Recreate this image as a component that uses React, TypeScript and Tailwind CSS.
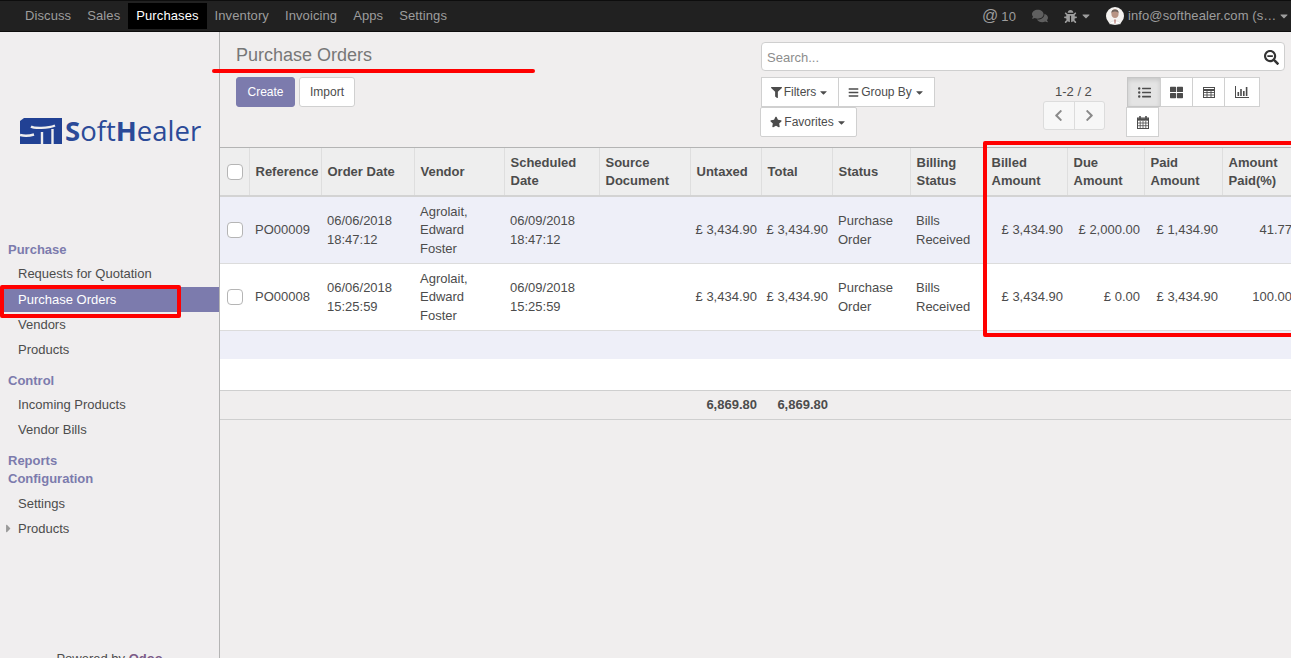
import { FaBars, FaBug, FaCaretDown, FaCaretRight, FaChevronLeft, FaChevronRight, FaComments, FaFilter, FaListUl, FaSearchMinus, FaStar, FaThLarge } from 'react-icons/fa';

const navItems = ['Discuss', 'Sales', 'Purchases', 'Inventory', 'Invoicing', 'Apps', 'Settings'];

const colWidths = [29, 72, 93, 90, 95, 91, 71, 71, 78, 75, 82, 77, 78, 74];

const headers = ['Reference', 'Order Date', 'Vendor', 'Scheduled Date', 'Source Document', 'Untaxed', 'Total', 'Status', 'Billing Status', 'Billed Amount', 'Due Amount', 'Paid Amount', 'Amount Paid(%)'];

const rows = [
  { ref: 'PO00009', date: ['06/06/2018', '18:47:12'], sched: ['06/09/2018', '18:47:12'], billed: '£ 3,434.90', due: '£ 2,000.00', paid: '£ 1,434.90', pct: '41.77', tint: true },
  { ref: 'PO00008', date: ['06/06/2018', '15:25:59'], sched: ['06/09/2018', '15:25:59'], billed: '£ 3,434.90', due: '£ 0.00', paid: '£ 3,434.90', pct: '100.00', tint: false },
];

function Checkbox() {
  return <div className="ml-[7px] h-4 w-4 rounded-[4px] border border-[#b5b5b5] bg-white" />;
}

function SideItem({ label, active, caret }: { label: string; active?: boolean; caret?: boolean }) {
  return (
    <div className={`relative flex h-[25px] items-center pl-[18px] ${active ? 'bg-[#7c7bad] text-white' : 'text-[#4c4c4c]'}`}>
      {caret && <FaCaretRight className="absolute left-[2px] text-[13px] text-[#999]" />}
      {label}
    </div>
  );
}

function SideHeading({ label }: { label: string }) {
  return <div className="pl-2 font-bold leading-[18px] text-[#7c7bad]">{label}</div>;
}

function Logo() {
  return (
    <div className="flex h-[28px] items-center pl-5">
      <svg width="42" height="26" viewBox="0 0 42 26" className="shrink-0">
        <rect width="42" height="26" fill="#214194" />
        <path d="M0 0 H4 L0 3 Z" fill="#eeedee" />
        <path d="M11 8.5 C14 10.5 28 10.5 35 7.5 M0 17 C4 18 9 18 14 16.5 M22 14 V26 M32.5 11 V26" stroke="#eeedee" strokeWidth="2.4" fill="none" />
      </svg>
      <span className="ml-[3px] whitespace-nowrap font-['Open_Sans',sans-serif] text-[27.5px] leading-none text-[#2b4a98]">
        <span className="font-bold">S</span>oft<span className="font-bold">H</span>ealer
      </span>
    </div>
  );
}

function Avatar() {
  return (
    <svg width="18" height="18" viewBox="0 0 18 18" className="shrink-0">
      <circle cx="9" cy="9" r="9" fill="#f4f2f0" />
      <ellipse cx="9" cy="6.6" rx="3.6" ry="4.4" fill="#b89484" />
      <path d="M5.4 6 C5 1.4 13 1.4 12.6 6 C11 4 7 4 5.4 6 Z" fill="#6d625c" />
      <path d="M3.5 17 C4 12.8 14 12.8 14.5 17 Z" fill="#fff" stroke="#ccc" strokeWidth="0.5" />
      <path d="M8.4 12.5 H9.6 L9.4 16.5 H8.6 Z" fill="#a8574e" />
    </svg>
  );
}

function BarChartIcon() {
  return (
    <svg width="14" height="12" viewBox="0 0 14 12" fill="#4c4c4c">
      <path d="M0 0 H1 V11 H14 V12 H0 Z" />
      <rect x="2.5" y="6" width="1.6" height="4" />
      <rect x="5.2" y="3" width="1.6" height="7" />
      <rect x="8" y="5" width="1.6" height="5" />
      <rect x="10.8" y="1" width="1.6" height="9" />
    </svg>
  );
}

function TableIcon() {
  return (
    <svg width="12" height="11" viewBox="0 0 12 11" fill="none" stroke="#4c4c4c">
      <rect x="0.5" y="0.5" width="11" height="10" />
      <path d="M0 3 H12" strokeWidth="2" />
      <path d="M0 5.5 H12 M0 8 H12 M4 2 V11 M8 2 V11" strokeWidth="0.9" />
    </svg>
  );
}

function CalendarIcon() {
  return (
    <svg width="12" height="13" viewBox="0 0 12 13" fill="none" stroke="#4c4c4c">
      <rect x="0.5" y="2" width="11" height="10.5" />
      <path d="M0 3.5 H12" strokeWidth="2.4" />
      <path d="M3 0 V3 M9 0 V3" strokeWidth="1.6" />
      <path d="M0 7 H12 M0 9.7 H12 M3.2 5 V13 M6 5 V13 M8.8 5 V13" strokeWidth="0.8" />
    </svg>
  );
}

const toolBtn = 'flex h-[30px] items-center justify-center border border-[#d0d0d0] bg-white text-[#4c4c4c]';

export default function App() {
  return (
    <div className="relative flex h-[658px] w-full flex-col overflow-hidden bg-[#f0eeee] font-['Liberation_Sans',Arial,sans-serif] text-[13px] text-[#4c4c4c]">
      {/* top bar */}
      <div className="flex h-[32px] shrink-0 items-center border-y border-[#0d0d0d] bg-[#212121] pl-[17px] pr-px tracking-[0.1px] text-[#9d9d9d]">
        {navItems.map((item) => (
          <div key={item} className={`flex h-[26px] items-center px-2 ${item === 'Purchases' ? 'bg-black text-white' : ''}`}>
            {item}
          </div>
        ))}
        <div className="ml-auto flex items-center">
          <span className="text-[16px] leading-none">@</span>
          <span className="ml-[3px] mt-px">10</span>
          <FaComments className="ml-[16px] text-[16px] text-[#5f5f5f]" />
          <FaBug className="ml-[16px] text-[13px]" />
          <FaCaretDown className="ml-[3px] text-[12px]" />
          <div className="ml-[14px]"><Avatar /></div>
          <span className="ml-1 w-[149px] whitespace-nowrap">info@softhealer.com (s…</span>
          <FaCaretDown className="ml-px text-[12px]" />
        </div>
      </div>

      <div className="flex min-h-0 flex-1">
        {/* sidebar */}
        <div className="w-[220px] shrink-0 border-r border-[#b4b4b4] bg-[#f0eeef]">
          <div className="pt-[85px]"><Logo /></div>
          <div className="mt-[96px]">
            <SideHeading label="Purchase" />
            <div className="mt-[2px]">
              <SideItem label="Requests for Quotation" />
              <div className="h-px" />
              <SideItem label="Purchase Orders" active />
              <SideItem label="Vendors" />
              <SideItem label="Products" />
            </div>
            <div className="mt-[10px]"><SideHeading label="Control" /></div>
            <div className="mt-[2px]">
              <SideItem label="Incoming Products" />
              <SideItem label="Vendor Bills" />
            </div>
            <div className="mt-[10px]">
              <SideHeading label="Reports" />
              <SideHeading label="Configuration" />
            </div>
            <div className="mt-[3px]">
              <SideItem label="Settings" />
              <SideItem label="Products" caret />
            </div>
          </div>
          <div className="mt-[108px] text-center">
            Powered by <span className="font-bold text-[#7c5b87]">Odoo</span>
          </div>
        </div>

        {/* main */}
        <div className="min-w-0 flex-1 overflow-hidden">
          {/* control panel */}
          <div className="flex h-[116px] border-b border-[#b4b4b4]">
            <div className="w-[541px] shrink-0 pl-4 pt-[10px]">
              <div className="text-[18px] leading-[26px] text-[#777]">Purchase Orders</div>
              <div className="mt-[9px] flex gap-1">
                <button className="h-[30px] w-[59px] rounded-[3px] border border-[#7c7bad] bg-[#7c7bad] text-[12px] text-white">Create</button>
                <button className="h-[30px] w-[56px] rounded-[3px] border border-[#d0d0d0] bg-white text-[12px] text-[#4c4c4c]">Import</button>
              </div>
            </div>
            <div className="w-[530px] shrink-0 pt-[10px]">
              <div className="flex h-[29px] w-[524px] items-center justify-between rounded-[4px] border border-[#cfcfcf] bg-white pl-[5px] pr-[5px]">
                <span className="pt-[2px] text-[#8d8d8d]">Search...</span>
                <FaSearchMinus className="mt-[2px] text-[15px] text-[#333]" />
              </div>
              <div className="mt-[6px] flex">
                <div className="w-[282px]">
                  <div className="flex w-[175px] flex-wrap text-[12px]">
                    <button className={`${toolBtn} w-[78px] gap-[2px]`}><FaFilter className="text-[11px]" />Filters<FaCaretDown className="text-[11px]" /></button>
                    <button className={`${toolBtn} -ml-px w-[97px] gap-[2px]`}><FaBars className="text-[11px]" />Group By<FaCaretDown className="text-[11px]" /></button>
                    <button className={`${toolBtn} -ml-px w-[97px] gap-[2px] rounded-[2px]`}><FaStar className="text-[12px]" />Favorites<FaCaretDown className="text-[11px]" /></button>
                  </div>
                </div>
                <div className="w-[84px]">
                  <div className="mt-[6px] pl-[12px] leading-[18px]">1-2 / 2</div>
                  <div className="flex h-[29px] w-[62px] rounded-[3px] border border-[#dcdcdc] bg-[#f7f7f7] text-[#8a8a8a]">
                    <div className="flex flex-1 items-center justify-center border-r border-[#dcdcdc]"><FaChevronLeft className="text-[13px]" /></div>
                    <div className="flex flex-1 items-center justify-center"><FaChevronRight className="text-[13px]" /></div>
                  </div>
                </div>
                <div className="flex w-[134px] flex-wrap content-start">
                  <button className={`${toolBtn} w-[34px] border-[#c6c6c6]! bg-[#e4e4e4]! shadow-[inset_0_2px_4px_rgba(0,0,0,0.13)]`}><FaListUl className="text-[13px]" /></button>
                  <button className={`${toolBtn} -ml-px w-[33px]`}><FaThLarge className="text-[13px]" /></button>
                  <button className={`${toolBtn} -ml-px w-[33px]`}><TableIcon /></button>
                  <button className={`${toolBtn} -ml-px w-[36px]`}><BarChartIcon /></button>
                  <button className={`${toolBtn} -ml-px w-[33px]`}><CalendarIcon /></button>
                </div>
              </div>
            </div>
          </div>

          {/* list */}
          <table className="table-fixed border-collapse text-[13px] leading-[18.57px]" style={{ width: colWidths.reduce((a, b) => a + b, 0) }}>
            <colgroup>
              {colWidths.map((w, i) => (
                <col key={i} style={{ width: w }} />
              ))}
            </colgroup>
            <thead>
              <tr className="h-[48px] border-b-2 border-[#d3d3d3] bg-[#eeeeee]">
                <th className="border-r border-[#dedede] p-0"><Checkbox /></th>
                {headers.map((h) => (
                  <th key={h} className="border-r border-[#dedede] pl-[6px] pr-1 pt-px text-left font-bold leading-[18px] text-[#4c4c4c]">{h}</th>
                ))}
              </tr>
            </thead>
            <tbody>
              {rows.map((r) => (
                <tr key={r.ref} className={`h-[67px] border-b border-[#dcdcdc] ${r.tint ? 'bg-[#eeeff8]' : 'bg-white'}`}>
                  <td className="p-0"><Checkbox /></td>
                  <td className="pl-[6px] pr-1 pt-[2px]">{r.ref}</td>
                  <td className="pl-[6px] pr-1 pt-[2px]">{r.date[0]}<br />{r.date[1]}</td>
                  <td className="pl-[6px] pr-1 pt-[2px]">Agrolait, Edward Foster</td>
                  <td className="pl-[6px] pr-1 pt-[2px]">{r.sched[0]}<br />{r.sched[1]}</td>
                  <td className="pl-[6px] pr-1" />
                  <td className="px-[4px] pt-[2px] text-right">£ 3,434.90</td>
                  <td className="px-[4px] pt-[2px] text-right">£ 3,434.90</td>
                  <td className="pl-[6px] pr-1 pt-[2px]">Purchase Order</td>
                  <td className="pl-[6px] pr-1 pt-[2px]">Bills Received</td>
                  <td className="px-[4px] pt-[2px] text-right">{r.billed}</td>
                  <td className="px-[4px] pt-[2px] text-right">{r.due}</td>
                  <td className="px-[4px] pt-[2px] text-right">{r.paid}</td>
                  <td className="px-[4px] pt-[2px] text-right">{r.pct}</td>
                </tr>
              ))}
              <tr className="h-[29px] bg-[#eeeff8]"><td colSpan={14} /></tr>
              <tr className="h-[31px] bg-white"><td colSpan={14} /></tr>
            </tbody>
            <tfoot>
              <tr className="h-[29px] border-y border-[#cfcfcf] font-bold">
                <td colSpan={6} />
                <td className="px-[4px] pt-[2px] text-right">6,869.80</td>
                <td className="px-[4px] pt-[2px] text-right">6,869.80</td>
                <td colSpan={6} />
              </tr>
            </tfoot>
          </table>
        </div>
      </div>

      {/* red annotations drawn over the screenshot */}
      <div className="absolute left-[212px] top-[69px] h-1 w-[323px] rounded-full bg-[#ff0000]" />
      <div className="absolute left-0 top-[285px] h-[33px] w-[181px] rounded-[2px] border-4 border-[#ff0000]" />
      <div className="absolute left-[983px] top-[141px] h-[196px] w-[330px] rounded-[2px] border-4 border-[#ff0000]" />
    </div>
  );
}
